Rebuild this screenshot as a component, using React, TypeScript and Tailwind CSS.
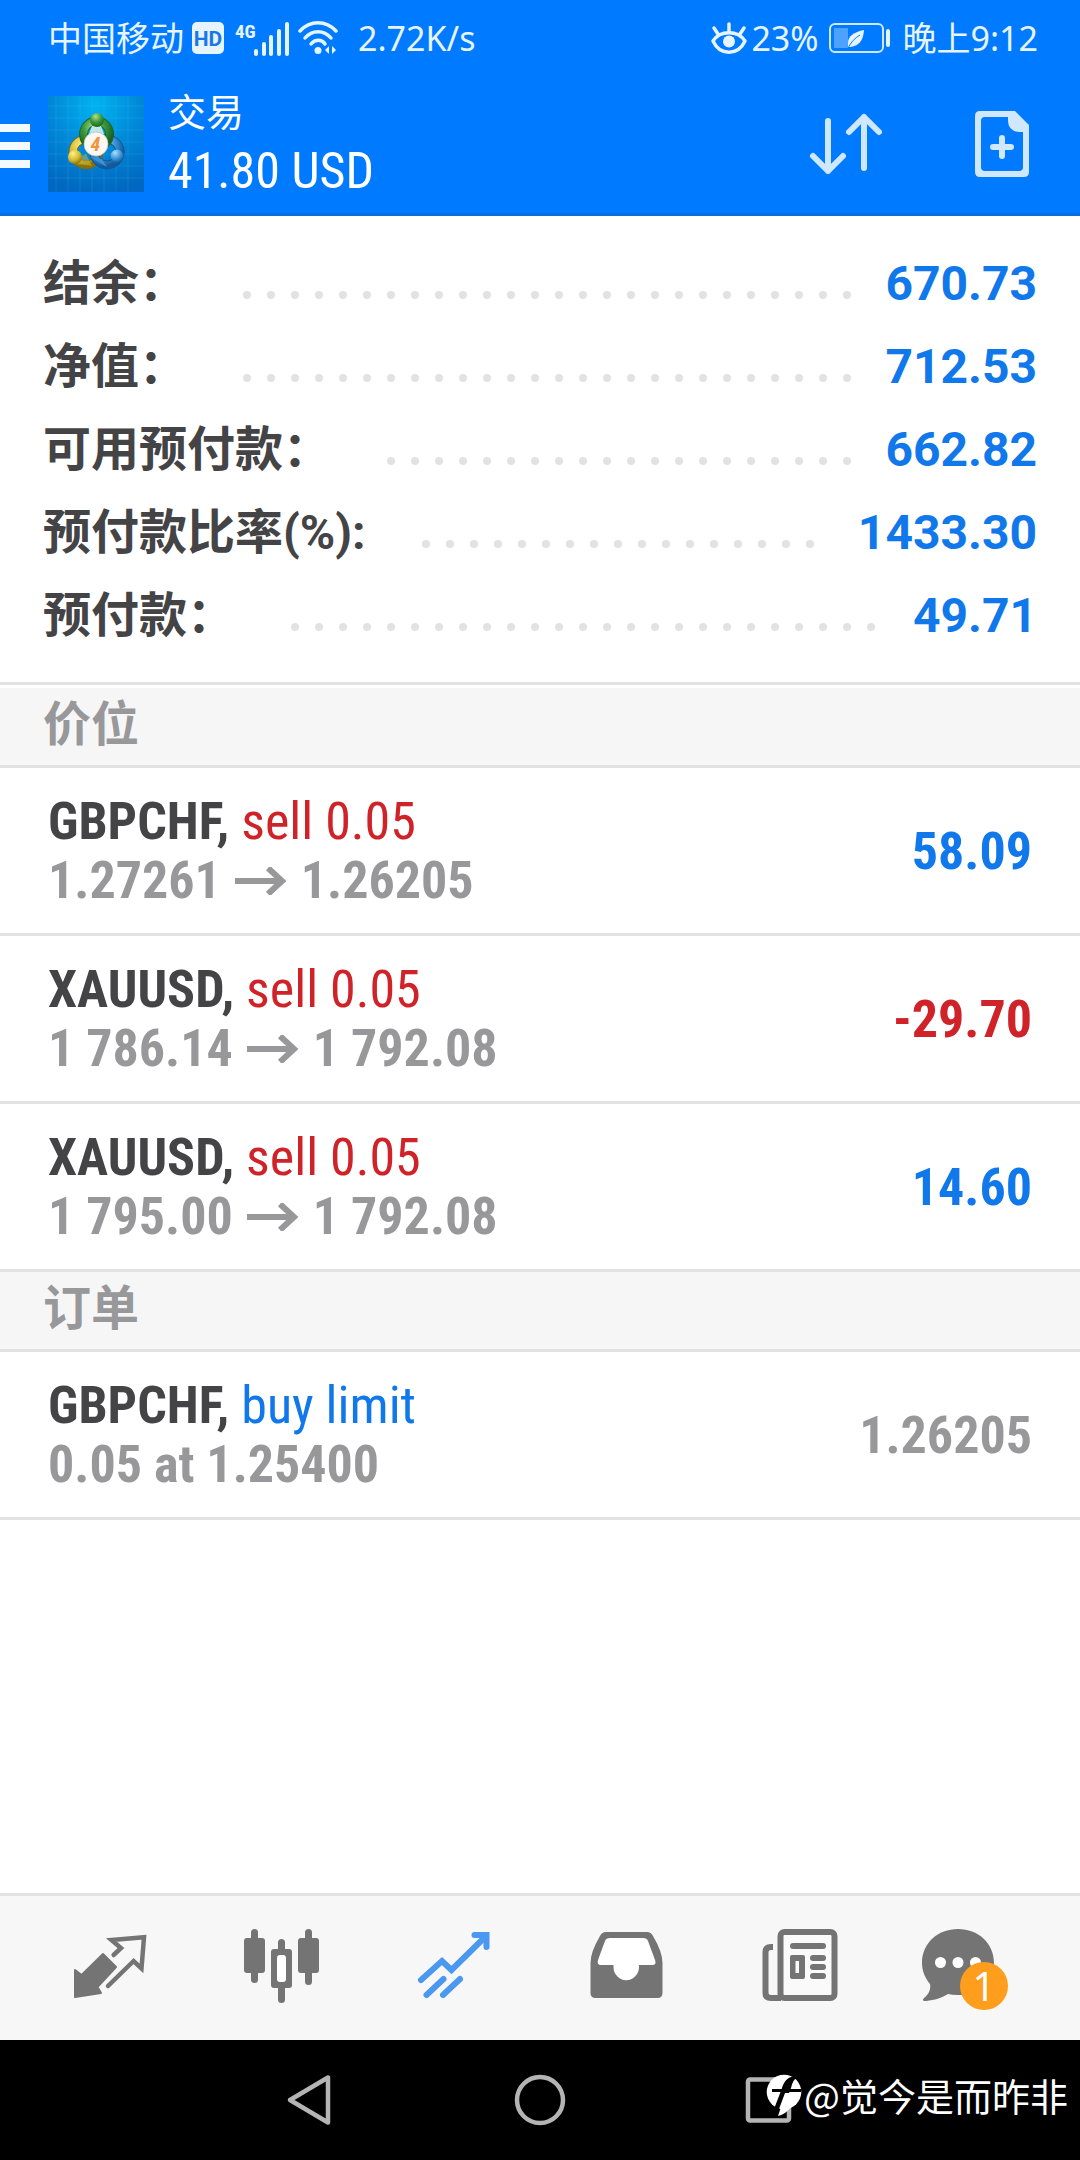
import type { ReactNode } from 'react';

type Tone = 'blue' | 'red' | 'gray';

const toneClass: Record<Tone, string> = {
  blue: 'text-[#1078ea]',
  red: 'text-[#cf2329]',
  gray: 'text-[#98989a]',
};

const summary = [
  { label: '结余：', value: '670.73' },
  { label: '净值：', value: '712.53' },
  { label: '可用预付款：', value: '662.82' },
  { label: '预付款比率(%):', value: '1433.30' },
  { label: '预付款：', value: '49.71' },
];

const positions = [
  { id: 1, symbol: 'GBPCHF', open: '1.27261', current: '1.26205', profit: '58.09', tone: 'blue' as Tone },
  { id: 2, symbol: 'XAUUSD', open: '1 786.14', current: '1 792.08', profit: '-29.70', tone: 'red' as Tone },
  { id: 3, symbol: 'XAUUSD', open: '1 795.00', current: '1 792.08', profit: '14.60', tone: 'blue' as Tone },
];

function StatusBar() {
  return (
    <div className="flex h-[75px] items-center justify-between pl-12 pr-[42px] text-[34px] leading-none text-[#e6f4ff] font-['Noto_Sans','Noto_Sans_CJK_SC',sans-serif]">
      <div className="flex items-center">
        <span>中国移动</span>
        <svg className="ml-2 h-8 w-8" viewBox="0 0 32 32">
          <rect width="32" height="32" rx="5" fill="#e6f4ff" />
          <text x="16" y="24" textAnchor="middle" fontSize="21" fontWeight="700" fill="#1a78e6" fontFamily="Roboto, sans-serif">
            HD
          </text>
        </svg>
        <svg className="ml-2.5 h-10 w-14" viewBox="0 -6 56 40" fill="#e6f4ff">
          <text x="1" y="14" fontSize="19" fontWeight="700" fontFamily="'Roboto Condensed', 'Liberation Sans Narrow', sans-serif">
            4G
          </text>
          <rect x="20" y="25" width="4" height="7" rx="2" />
          <rect x="28" y="18" width="4" height="14" rx="2" />
          <rect x="35" y="11" width="4" height="21" rx="2" />
          <rect x="43" y="5" width="4" height="27" rx="2" />
          <rect x="51" y="-2" width="4" height="34" rx="2" />
        </svg>
        <svg className="ml-2 h-[34px] w-10" viewBox="0 0 40 34" fill="none" stroke="#e6f4ff" strokeWidth="3.5" strokeLinecap="round">
          <path d="M2 10C12 -1 28 -1 38 10" />
          <path d="M7 17C14 8.500 26 8.500 33 17" />
          <path d="M13 23C17 18 24 18 27 23" />
          <circle cx="20" cy="29.500" r="3.500" fill="#e6f4ff" stroke="none" />
          <path d="M31 25v8l-4-4zM34 25v8l4-4z" fill="#e6f4ff" stroke="none" />
        </svg>
        <span className="ml-5">2.72K/s</span>
      </div>
      <div className="flex items-center">
        <svg className="h-8 w-9" viewBox="0 0 36 32" fill="none" stroke="#e6f4ff" strokeWidth="3.500" strokeLinecap="round" strokeLinejoin="round">
          <path d="M2 19C9 8 27 8 34 19C27 34 9 34 2 19Z" />
          <path d="M18 2v8M3 6l4 6M33 6l-4 6" />
          <circle cx="18" cy="19.500" r="6" fill="#e6f4ff" stroke="none" />
        </svg>
        <span className="ml-1">23%</span>
        <svg className="ml-2.5 h-[30px] w-[62px]" viewBox="0 0 62 30">
          <rect x="1" y="1" width="53" height="28" rx="5" fill="none" stroke="#cfe8ff" strokeWidth="2" />
          <rect x="5" y="5" width="14" height="20" fill="#4da2ff" />
          <path d="M35 7C25 9 19 13 19 20L19 24C24 24 34 23 35 7Z" fill="#e6f4ff" />
          <path d="M19 25C22 19 26 15 31 12" fill="none" stroke="#007aff" strokeWidth="1" />
          <rect x="57" y="6" width="4" height="18" rx="2" fill="#e6f4ff" />
        </svg>
        <span className="ml-3">晚上9:12</span>
      </div>
    </div>
  );
}

function AppLogo() {
  return (
    <svg className="h-24 w-24" viewBox="0 0 96 96">
      <defs>
        <radialGradient id="sky" cx="0.500" cy="0.100" r="0.900">
          <stop offset="0" stopColor="#00b4f0" />
          <stop offset="0.500" stopColor="#0089d8" />
          <stop offset="1" stopColor="#0068c0" />
        </radialGradient>
        <radialGradient id="green" cx="0.400" cy="0.250" r="0.800">
          <stop offset="0" stopColor="#b5e08a" />
          <stop offset="0.500" stopColor="#3d9a3d" />
          <stop offset="1" stopColor="#17601f" />
        </radialGradient>
        <radialGradient id="yellow" cx="0.350" cy="0.250" r="0.800">
          <stop offset="0" stopColor="#fff08a" />
          <stop offset="0.600" stopColor="#d4b92c" />
          <stop offset="1" stopColor="#857112" />
        </radialGradient>
        <radialGradient id="azure" cx="0.350" cy="0.250" r="0.800">
          <stop offset="0" stopColor="#a9e0ff" />
          <stop offset="0.600" stopColor="#3a93d6" />
          <stop offset="1" stopColor="#125a9c" />
        </radialGradient>
      </defs>
      <rect width="96" height="96" fill="url(#sky)" />
      <path
        d="M8 0v96M20 0v96M32 0v96M44 0v96M56 0v96M68 0v96M80 0v96M0 10h96M0 22h96M0 34h96M0 46h96M0 58h96M0 70h96M0 82h96"
        stroke="#5cc4ff"
        strokeOpacity="0.180"
      />
      <g fill="none">
        <circle cx="38" cy="56" r="13" stroke="#6d6a18" strokeWidth="9" />
        <circle cx="38" cy="56" r="13" stroke="url(#yellow)" strokeWidth="7" />
        <circle cx="59" cy="56" r="13" stroke="#16558e" strokeWidth="9" />
        <circle cx="59" cy="56" r="13" stroke="url(#azure)" strokeWidth="7" />
        <circle cx="48.500" cy="38" r="13" stroke="#1c6330" strokeWidth="9" />
        <circle cx="48.500" cy="38" r="13" stroke="url(#green)" strokeWidth="7" />
      </g>
      <path d="M42 61L59 71L54 63Z" fill="#3a93d6" />
      <path d="M20 66L38 58L44 70Z" fill="#d4b92c" fillOpacity="0.500" />
      <path d="M44 30h9l3 8H41z" fill="#eafbe5" fillOpacity="0.800" />
      <circle cx="49" cy="24" r="7" fill="url(#green)" />
      <circle cx="27" cy="61" r="7" fill="url(#yellow)" />
      <circle cx="69" cy="60" r="6.500" fill="url(#azure)" />
      <circle cx="48" cy="48" r="12" fill="#fbf8f4" stroke="#c9c2b4" strokeWidth="0.800" />
      <text x="47.500" y="55" textAnchor="middle" fontSize="20" fontWeight="700" fontStyle="italic" fill="#f0953f" fontFamily="'Roboto Condensed', sans-serif">
        4
      </text>
    </svg>
  );
}

function Header() {
  return (
    <header className="border-b-3 border-[#0a6ee0] bg-[#007aff]">
      <StatusBar />
      <div className="flex h-[138px] items-center pr-[50px]">
        <button aria-label="Menu" className="mr-[18px] flex w-[30px] flex-col gap-2.5 pt-1">
          <span className="h-2 bg-[#f2faff]" />
          <span className="h-2 bg-[#f2faff]" />
          <span className="h-2 bg-[#f2faff]" />
        </button>
        <AppLogo />
        <div className="ml-6 flex-1 text-white">
          <h1 className="text-[38px] leading-[54px] font-['Noto_Sans_CJK_SC',sans-serif]">交易</h1>
          <p className="text-[50px] leading-[68px]">41.80 USD</p>
        </div>
        <button aria-label="Sort" className="mr-[90px]">
          <svg className="h-[66px] w-[76px]" viewBox="0 0 76 66" fill="none" stroke="#cfe7ff" strokeWidth="6" strokeLinecap="round" strokeLinejoin="round">
            <path d="M20 10V60M5 45L20 60L35 45" />
            <path d="M56 57V6M41 21L56 6L71 21" />
          </svg>
        </button>
        <button aria-label="New order">
          <svg className="h-[66px] w-[56px]" viewBox="0 0 56 66">
            <path
              d="M6 0H41L55 14V61Q55 66 50 66H6Q1 66 1 61V5Q1 0 6 0ZM11 6Q7 6 7 10V56Q7 60 11 60H45Q49 60 49 56V21H45Q34 20 34 10V6Z"
              fill="#cfe7ff"
              fillRule="evenodd"
            />
            <path d="M28 27V45M19 36H37" stroke="#cfe7ff" strokeWidth="6" strokeLinecap="round" />
          </svg>
        </button>
      </div>
    </header>
  );
}

// Dots wrap onto a clipped second line, so only whole ones are ever shown
function DotLeader() {
  return (
    <span aria-hidden="true" className="ml-12 mr-5 flex h-2 min-w-0 flex-1 flex-wrap overflow-hidden">
      {Array.from({ length: 40 }, (_, i) => (
        <span key={i} className="flex w-6 justify-center">
          <span className="h-2 w-2 rounded-full bg-[#e2e2e3]" />
        </span>
      ))}
    </span>
  );
}

function SectionTitle({ children }: { children: ReactNode }) {
  return (
    <h2 className="border-b-3 border-[#e2e2e3] bg-[#f6f6f7] px-[43px] pb-3 text-[48px] font-bold leading-[65px] text-[#98989a] font-['Noto_Sans_CJK_SC',sans-serif]">
      {children}
    </h2>
  );
}

interface RowProps {
  symbol: string;
  action: string;
  actionTone: Tone;
  detail: ReactNode;
  value: string;
  valueTone: Tone;
}

function Row({ symbol, action, actionTone, detail, value, valueTone }: RowProps) {
  return (
    <li className="flex items-center justify-between border-b-3 border-[#e2e2e3] px-12 pb-[23px] pt-6 text-[52px] leading-[59px]">
      <div>
        <div>
          <span className="font-bold text-[#444446]">{symbol},</span>{' '}
          <span className={toneClass[actionTone]}>{action}</span>
        </div>
        <div className="flex items-center font-bold text-[#98989a]">{detail}</div>
      </div>
      <span className={`font-bold ${toneClass[valueTone]}`}>{value}</span>
    </li>
  );
}

function PriceArrow() {
  return (
    <svg className="mx-3.5 h-7 w-[52px]" viewBox="0 0 52 28" fill="none" stroke="currentColor" strokeWidth="6">
      <path d="M0 14H47M33 1L47 14L33 27" />
    </svg>
  );
}

function QuotesIcon() {
  return (
    <svg className="h-24 w-24" viewBox="0 0 96 96">
      <path d="M13 50L19.600 55L41 34L54 47L35.500 67L39 73L13 77Z" fill="#747474" stroke="#747474" strokeWidth="2" strokeLinejoin="round" />
      <path
        d="M51.600 35L59 28L49.500 20L82 17.300L79.500 48.500L71.600 41L46 66"
        fill="none"
        stroke="#747474"
        strokeWidth="4.500"
        strokeLinecap="round"
      />
    </svg>
  );
}

function ChartIcon() {
  return (
    <svg className="h-24 w-24" viewBox="0 0 96 96" fill="#747474">
      <rect x="10" y="18" width="21" height="35" rx="3" />
      <rect x="17" y="9" width="7" height="54" rx="3.500" />
      <rect x="37" y="29" width="21" height="39" rx="3" />
      <rect x="44" y="19" width="7" height="64" rx="3.500" />
      <rect x="43" y="35" width="9" height="27" rx="3" fill="#fff" />
      <rect x="64" y="18" width="21" height="35" rx="3" />
      <rect x="71" y="9" width="7" height="56" rx="3.500" />
    </svg>
  );
}

function TradeIcon() {
  return (
    <svg className="h-24 w-24" viewBox="0 0 96 96" fill="none" stroke="#4a98f0" strokeWidth="6" strokeLinecap="round">
      <path d="M15 60L36 41L45.500 50L79 17" strokeLinejoin="miter" />
      <path d="M68.500 15H80.500V27" />
      <path d="M20.500 75L37.500 59M37 75L54 59" />
    </svg>
  );
}

function HistoryIcon() {
  return (
    <svg className="h-24 w-24" viewBox="0 0 96 96">
      <path
        d="M28 12H69Q73 12 75 16Q84.500 32 84.500 43V73Q84.500 78 79.500 78H17.500Q12.500 78 12.500 73V43Q12.500 32 22 16Q24 12 28 12Z"
        fill="#747474"
      />
      <path d="M32 18Q28 18 27 21L20 40Q18.500 45 23 45H35.500V47A12.500 13 0 0 0 61 47V45H74Q79 45 77 40L70 21Q69 18 65 18Z" fill="#fff" />
    </svg>
  );
}

function NewsIcon() {
  return (
    <svg className="h-24 w-24" viewBox="0 0 96 96">
      <path d="M23 27H21Q15.500 27 15.500 32V73Q15.500 78 21 78H31" fill="none" stroke="#747474" strokeWidth="6" />
      <rect x="30.500" y="12" width="54" height="66" rx="4" fill="#fafafa" stroke="#747474" strokeWidth="6" />
      <g fill="#747474">
        <rect x="40" y="23" width="36" height="6" rx="3" />
        <path d="M42 35H53Q55 35 55 37V57Q55 59 53 59H42Q40 59 40 57V37Q40 35 42 35ZM45.500 41V53H49V41Z" fillRule="evenodd" />
        <rect x="60" y="35" width="16" height="6" rx="3" />
        <rect x="60" y="44" width="16" height="6" rx="3" />
        <rect x="60" y="53" width="16" height="6" rx="3" />
      </g>
    </svg>
  );
}

function ChatIcon() {
  return (
    <svg className="h-24 w-24" viewBox="0 0 96 96">
      <path
        d="M36 9C56 9 72 23 72 43C72 62 58 76 36 75Q30 75 26 74C18 79 8 81 2 81Q0 80 2 78C7 74 9 69 8 64C3 58 0 51 0 43C0 23 16 9 36 9Z"
        fill="#747474"
      />
      <circle cx="18.500" cy="42.500" r="5.500" fill="#fff" />
      <circle cx="36" cy="42.500" r="5.500" fill="#fff" />
      <circle cx="53.500" cy="42.500" r="5.500" fill="#fff" />
    </svg>
  );
}

const tabs = [
  { name: 'Quotes', icon: <QuotesIcon /> },
  { name: 'Chart', icon: <ChartIcon /> },
  { name: 'Trade', icon: <TradeIcon /> },
  { name: 'History', icon: <HistoryIcon /> },
  { name: 'News', icon: <NewsIcon /> },
  { name: 'Messages', icon: <ChatIcon />, badge: 1 },
];

function TabBar() {
  return (
    <nav className="flex border-t-3 border-[#e2e2e3] bg-[#f7f7f7] px-6 py-6">
      {tabs.map((tab) => (
        <div key={tab.name} className="flex flex-1 justify-center">
          <button aria-label={tab.name} className="relative">
            {tab.icon}
            {tab.badge && (
              <span className="absolute bottom-1.5 right-2.5 flex h-12 w-12 items-center justify-center rounded-full bg-[#ff9d1c] text-[40px] leading-none text-white font-['Noto_Sans',sans-serif]">
                {tab.badge}
              </span>
            )}
          </button>
        </div>
      ))}
    </nav>
  );
}

function SystemNav() {
  return (
    <div className="relative flex h-[120px] items-center justify-center gap-[174px] bg-black">
      <button aria-label="Back">
        <svg className="h-14 w-14" viewBox="0 0 56 56" fill="none" stroke="#b4b4b4" strokeWidth="4.500" strokeLinejoin="round">
          <path d="M8 28L46 5.500V50.500Z" />
        </svg>
      </button>
      <button aria-label="Home">
        <svg className="h-14 w-14" viewBox="0 0 56 56" fill="none" stroke="#b4b4b4" strokeWidth="4.500">
          <circle cx="28" cy="28" r="23" />
        </svg>
      </button>
      <button aria-label="Recent apps">
        <svg className="h-14 w-14" viewBox="0 0 56 56" fill="none" stroke="#b4b4b4" strokeWidth="4.500">
          <rect x="6" y="7.500" width="41" height="41" rx="2" />
        </svg>
      </button>
      <div className="absolute right-3 top-[27px] flex items-center text-[38px] leading-[56px] text-white font-['Noto_Sans_CJK_SC',sans-serif]">
        <svg className="mr-0.5 h-11 w-9" viewBox="0 0 36 44">
          <circle cx="18" cy="19" r="17.300" fill="#fff" />
          <path d="M15 34L12 43Q20 41 25 34Z" fill="#fff" />
          <path d="M31 3C23 3 18 7 15.500 16.500L8 36H13L19 20H23L25 15Q27 6 31 5Z" fill="#000" />
          <path d="M6 17.500H35" stroke="#000" strokeWidth="3" />
        </svg>
        <span>@觉今是而昨非</span>
      </div>
    </div>
  );
}

export default function App() {
  return (
    <div className="flex min-h-screen flex-col bg-white font-['Roboto_Condensed','Liberation_Sans_Narrow',sans-serif]">
      <Header />
      <main className="flex-1">
        <dl className="border-b-3 border-[#e2e2e3] pb-[25px] pl-[43px] pr-[43px] pt-[26px] text-[48px] font-bold leading-[83px] font-['Roboto','Noto_Sans_CJK_SC',sans-serif]">
          {summary.map((item) => (
            <div key={item.label} className="flex items-center">
              <dt className="text-[#444446]">{item.label}</dt>
              <div className="flex flex-1 pt-[22px]">
                <DotLeader />
              </div>
              <dd className="text-[#1078ea]">{item.value}</dd>
            </div>
          ))}
        </dl>
        <section className="pt-[3px]">
          <SectionTitle>价位</SectionTitle>
          <ul>
            {positions.map((p) => (
              <Row
                key={p.id}
                symbol={p.symbol}
                action="sell 0.05"
                actionTone="red"
                detail={
                  <>
                    {p.open}
                    <PriceArrow />
                    {p.current}
                  </>
                }
                value={p.profit}
                valueTone={p.tone}
              />
            ))}
          </ul>
        </section>
        <section>
          <SectionTitle>订单</SectionTitle>
          <ul>
            <Row
              symbol="GBPCHF"
              action="buy limit"
              actionTone="blue"
              detail="0.05 at 1.25400"
              value="1.26205"
              valueTone="gray"
            />
          </ul>
        </section>
      </main>
      <TabBar />
      <SystemNav />
    </div>
  );
}
